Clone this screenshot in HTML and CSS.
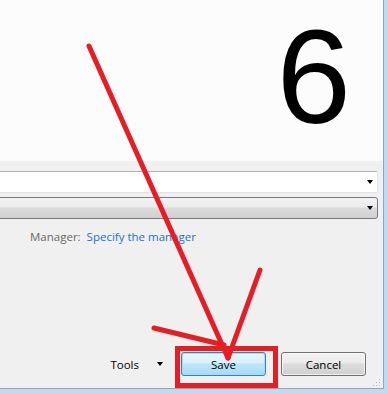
FILE: index.html
```html
<!DOCTYPE html>
<html>
<head>
<meta charset="utf-8">
<link rel="stylesheet" href="styles.css">
</head>
<body>
<div class="frame">
  <div class="dialog">
    <div class="preview"><span class="digit">6</span></div>
    <div class="settings">
      <div class="combo combo-edit"><span class="caret"></span></div>
      <div class="combo combo-list"><span class="caret"></span></div>
      <div class="manager"><span class="label">Manager:</span><a class="link">Specify the manager</a></div>
      <div class="actions">
        <div class="tools"><span>Tools</span><span class="caret"></span></div>
        <button class="btn btn-default">Save</button>
        <button class="btn">Cancel</button>
      </div>
    </div>
    <svg class="grip" width="8" height="8" viewBox="0 0 8 8">
      <rect x="6" y="0" width="1" height="1" fill="#b8b8b8"/>
      <rect x="3" y="3" width="1" height="1" fill="#b8b8b8"/>
      <rect x="6" y="3" width="1" height="1" fill="#b8b8b8"/>
      <rect x="0" y="6" width="1" height="1" fill="#b8b8b8"/>
      <rect x="3" y="6" width="1" height="1" fill="#b8b8b8"/>
      <rect x="6" y="6" width="1" height="1" fill="#b8b8b8"/>
    </svg>
  </div>
</div>
<svg class="marks" width="388" height="394" viewBox="0 0 388 394">
  <g stroke="#e51d24" stroke-width="5" stroke-linecap="round" fill="none">
    <line x1="89" y1="46" x2="228" y2="358"/>
    <line x1="260" y1="270" x2="228" y2="358"/>
    <line x1="154" y1="328" x2="224" y2="345"/>
    <rect x="177.5" y="348.5" width="98" height="37" stroke-linecap="butt"/>
  </g>
</svg>
</body>
</html>
```
FILE: styles.css
```css
html, body {
  margin: 0;
  padding: 0;
}
body {
  width: 388px;
  height: 394px;
  overflow: hidden;
  position: relative;
  font-family: "Open Sans", "Noto Sans", sans-serif;
  font-size: 11.5px;
}
.frame {
  width: 388px;
  height: 394px;
  box-sizing: border-box;
  border-right: 4px solid #c4d8ee;
  border-bottom: 5px solid #c4d8ee;
}
.dialog {
  position: relative;
  height: 100%;
  box-sizing: border-box;
  border-right: 1px solid #97a4b2;
  border-bottom: 1px solid #97a4b2;
  display: flex;
  flex-direction: column;
}
.preview {
  height: 161px;
  background: #fcfcfc;
  display: flex;
  justify-content: flex-end;
  align-items: flex-start;
  padding: 0 32px 0 0;
  box-sizing: border-box;
}
.digit {
  font-family: "Liberation Sans", Arial, sans-serif;
  font-size: 134px;
  line-height: normal;
  color: #000;
}
.settings {
  flex: 1;
  background: #f0f0f0;
  display: flex;
  flex-direction: column;
  padding: 10px 5px 12px 0;
}
.combo {
  height: 22px;
  box-sizing: border-box;
  margin-left: -4px;
  border-radius: 2px;
  display: flex;
  justify-content: flex-end;
  align-items: center;
  padding-right: 4px;
}
.combo-edit {
  background: #fff;
  border: 1px solid #dfe3e8;
  border-top-color: #acb0b6;
}
.combo-list {
  margin-top: 4px;
  border: 1px solid #7a7a7a;
  border-radius: 3px;
  background: linear-gradient(#f3f3f3 0%, #ebebeb 45%, #dcdcdc 50%, #d0d0d0 100%);
}
.caret {
  width: 0;
  height: 0;
  border-left: 3.5px solid transparent;
  border-right: 3.5px solid transparent;
  border-top: 4px solid #000;
}
.manager {
  margin-top: 10px;
  padding-left: 30px;
  line-height: 16px;
  color: #6a6a6a;
  display: flex;
  gap: 6px;
}
.link {
  color: #1e6fc8;
}
.actions {
  margin-top: auto;
  display: flex;
  justify-content: flex-end;
  align-items: center;
  height: 24px;
}
.tools {
  display: flex;
  align-items: center;
  gap: 18px;
  margin-right: 18px;
  color: #000;
}
.btn {
  font-family: inherit;
  font-size: 11.5px;
  color: #000;
  width: 85px;
  height: 24px;
  padding: 0;
  border: 1px solid #707070;
  border-radius: 3px;
  background: linear-gradient(#f2f2f2 0%, #ebebeb 45%, #dddddd 50%, #cfcfcf 100%);
  box-shadow: inset 0 0 0 1px rgba(255,255,255,0.7);
}
.btn + .btn {
  margin-left: 15px;
  margin-right: 12px;
}
.btn-default {
  border-color: #3c7fb1;
  background: linear-gradient(#eaf6fd 0%, #d9f0fc 45%, #bee6fd 50%, #a7d9f5 100%);
  box-shadow: inset 0 0 0 1px #9ee0fc;
}
.grip {
  position: absolute;
  right: 2px;
  bottom: 1px;
}
.marks {
  position: absolute;
  left: 0;
  top: 0;
  pointer-events: none;
}
```
